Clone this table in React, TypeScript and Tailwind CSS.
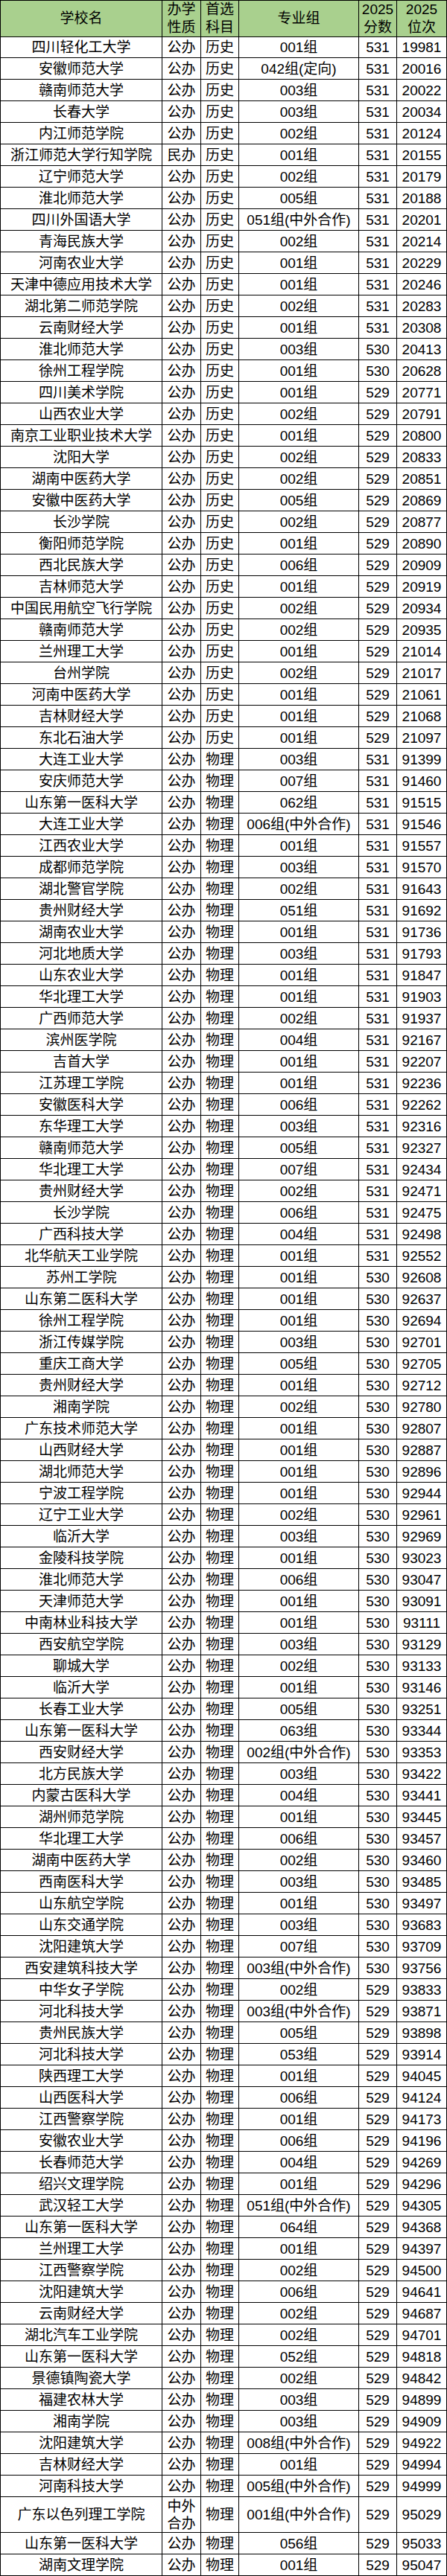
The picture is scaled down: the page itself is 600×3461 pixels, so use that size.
const rows = `四川轻化工大学|公办|历史|001组|531|19981
安徽师范大学|公办|历史|042组(定向)|531|20016
赣南师范大学|公办|历史|003组|531|20022
长春大学|公办|历史|003组|531|20034
内江师范学院|公办|历史|002组|531|20124
浙江师范大学行知学院|民办|历史|001组|531|20155
辽宁师范大学|公办|历史|002组|531|20179
淮北师范大学|公办|历史|005组|531|20188
四川外国语大学|公办|历史|051组(中外合作)|531|20201
青海民族大学|公办|历史|002组|531|20214
河南农业大学|公办|历史|001组|531|20229
天津中德应用技术大学|公办|历史|001组|531|20246
湖北第二师范学院|公办|历史|002组|531|20283
云南财经大学|公办|历史|001组|531|20308
淮北师范大学|公办|历史|003组|530|20413
徐州工程学院|公办|历史|001组|530|20628
四川美术学院|公办|历史|001组|529|20771
山西农业大学|公办|历史|002组|529|20791
南京工业职业技术大学|公办|历史|001组|529|20800
沈阳大学|公办|历史|002组|529|20833
湖南中医药大学|公办|历史|002组|529|20851
安徽中医药大学|公办|历史|005组|529|20869
长沙学院|公办|历史|002组|529|20877
衡阳师范学院|公办|历史|001组|529|20890
西北民族大学|公办|历史|006组|529|20909
吉林师范大学|公办|历史|001组|529|20919
中国民用航空飞行学院|公办|历史|002组|529|20934
赣南师范大学|公办|历史|002组|529|20935
兰州理工大学|公办|历史|001组|529|21014
台州学院|公办|历史|002组|529|21017
河南中医药大学|公办|历史|001组|529|21061
吉林财经大学|公办|历史|001组|529|21068
东北石油大学|公办|历史|001组|529|21097
大连工业大学|公办|物理|003组|531|91399
安庆师范大学|公办|物理|007组|531|91460
山东第一医科大学|公办|物理|062组|531|91515
大连工业大学|公办|物理|006组(中外合作)|531|91546
江西农业大学|公办|物理|001组|531|91557
成都师范学院|公办|物理|003组|531|91570
湖北警官学院|公办|物理|002组|531|91643
贵州财经大学|公办|物理|051组|531|91692
湖南农业大学|公办|物理|001组|531|91736
河北地质大学|公办|物理|003组|531|91793
山东农业大学|公办|物理|001组|531|91847
华北理工大学|公办|物理|001组|531|91903
广西师范大学|公办|物理|002组|531|91937
滨州医学院|公办|物理|004组|531|92167
吉首大学|公办|物理|001组|531|92207
江苏理工学院|公办|物理|001组|531|92236
安徽医科大学|公办|物理|006组|531|92262
东华理工大学|公办|物理|003组|531|92316
赣南师范大学|公办|物理|005组|531|92327
华北理工大学|公办|物理|007组|531|92434
贵州财经大学|公办|物理|002组|531|92471
长沙学院|公办|物理|006组|531|92475
广西科技大学|公办|物理|004组|531|92498
北华航天工业学院|公办|物理|001组|531|92552
苏州工学院|公办|物理|001组|530|92608
山东第二医科大学|公办|物理|001组|530|92637
徐州工程学院|公办|物理|001组|530|92694
浙江传媒学院|公办|物理|003组|530|92701
重庆工商大学|公办|物理|005组|530|92705
贵州财经大学|公办|物理|001组|530|92712
湘南学院|公办|物理|002组|530|92780
广东技术师范大学|公办|物理|001组|530|92807
山西财经大学|公办|物理|001组|530|92887
湖北师范大学|公办|物理|001组|530|92896
宁波工程学院|公办|物理|001组|530|92944
辽宁工业大学|公办|物理|002组|530|92961
临沂大学|公办|物理|003组|530|92969
金陵科技学院|公办|物理|001组|530|93023
淮北师范大学|公办|物理|006组|530|93047
天津师范大学|公办|物理|001组|530|93091
中南林业科技大学|公办|物理|001组|530|93111
西安航空学院|公办|物理|003组|530|93129
聊城大学|公办|物理|002组|530|93133
临沂大学|公办|物理|001组|530|93146
长春工业大学|公办|物理|005组|530|93251
山东第一医科大学|公办|物理|063组|530|93344
西安财经大学|公办|物理|002组(中外合作)|530|93353
北方民族大学|公办|物理|003组|530|93422
内蒙古医科大学|公办|物理|004组|530|93441
湖州师范学院|公办|物理|001组|530|93445
华北理工大学|公办|物理|006组|530|93457
湖南中医药大学|公办|物理|002组|530|93460
西南医科大学|公办|物理|003组|530|93485
山东航空学院|公办|物理|001组|530|93497
山东交通学院|公办|物理|003组|530|93683
沈阳建筑大学|公办|物理|007组|530|93709
西安建筑科技大学|公办|物理|003组(中外合作)|530|93756
中华女子学院|公办|物理|002组|529|93833
河北科技大学|公办|物理|003组(中外合作)|529|93871
贵州民族大学|公办|物理|005组|529|93898
河北科技大学|公办|物理|053组|529|93914
陕西理工大学|公办|物理|001组|529|94045
山西医科大学|公办|物理|006组|529|94124
江西警察学院|公办|物理|001组|529|94173
安徽农业大学|公办|物理|006组|529|94196
长春师范大学|公办|物理|004组|529|94269
绍兴文理学院|公办|物理|001组|529|94296
武汉轻工大学|公办|物理|051组(中外合作)|529|94305
山东第一医科大学|公办|物理|064组|529|94368
兰州理工大学|公办|物理|001组|529|94397
江西警察学院|公办|物理|002组|529|94500
沈阳建筑大学|公办|物理|006组|529|94641
云南财经大学|公办|物理|002组|529|94687
湖北汽车工业学院|公办|物理|002组|529|94701
山东第一医科大学|公办|物理|052组|529|94818
景德镇陶瓷大学|公办|物理|002组|529|94842
福建农林大学|公办|物理|003组|529|94899
湘南学院|公办|物理|003组|529|94909
沈阳建筑大学|公办|物理|008组(中外合作)|529|94922
吉林财经大学|公办|物理|001组|529|94994
河南科技大学|公办|物理|005组(中外合作)|529|94999
广东以色列理工学院|中外合办|物理|001组(中外合作)|529|95029
山东第一医科大学|公办|物理|056组|529|95033
湖南文理学院|公办|物理|001组|529|95047`
  .split('\n')
  .map(line => line.split('|'));

const header = ['学校名', '办学\n性质', '首选\n科目', '专业组', '2025\n分数', '2025\n位次'];

const cols = 'grid grid-cols-[217px_52px_51px_161px_51px_67px]';
const cell = 'flex items-center justify-center text-center border-r border-b border-black whitespace-pre-line';

export default function App() {
    return (
        <div className="w-[600px] bg-white text-black text-[19px] font-['Liberation_Sans','Noto_Sans_CJK_SC',sans-serif]">
            <div className="border-l border-t border-black">
                {/* Header */}
                <div className={`${cols} bg-[#a9d08e] h-[48px] leading-[24px]`}>
                    {header.map((h, i) => (
                        <div key={i} className={cell}>{h}</div>
                    ))}
                </div>

                {/* Body */}
                {rows.map((r, i) => {
                    const tall = r[1].length > 2;
                    return (
                        <div key={i} className={`${cols} ${tall ? 'h-[48px]' : 'h-[29px]'} leading-[23px]`}>
                            <div className={cell}>{r[0]}</div>
                            <div className={cell}>{tall ? '中外\n合办' : r[1]}</div>
                            <div className={cell}>{r[2]}</div>
                            <div className={cell}>{r[3]}</div>
                            <div className={cell}>{r[4]}</div>
                            <div className={cell}>{r[5]}</div>
                        </div>
                    );
                })}
            </div>
        </div>
    );
}
